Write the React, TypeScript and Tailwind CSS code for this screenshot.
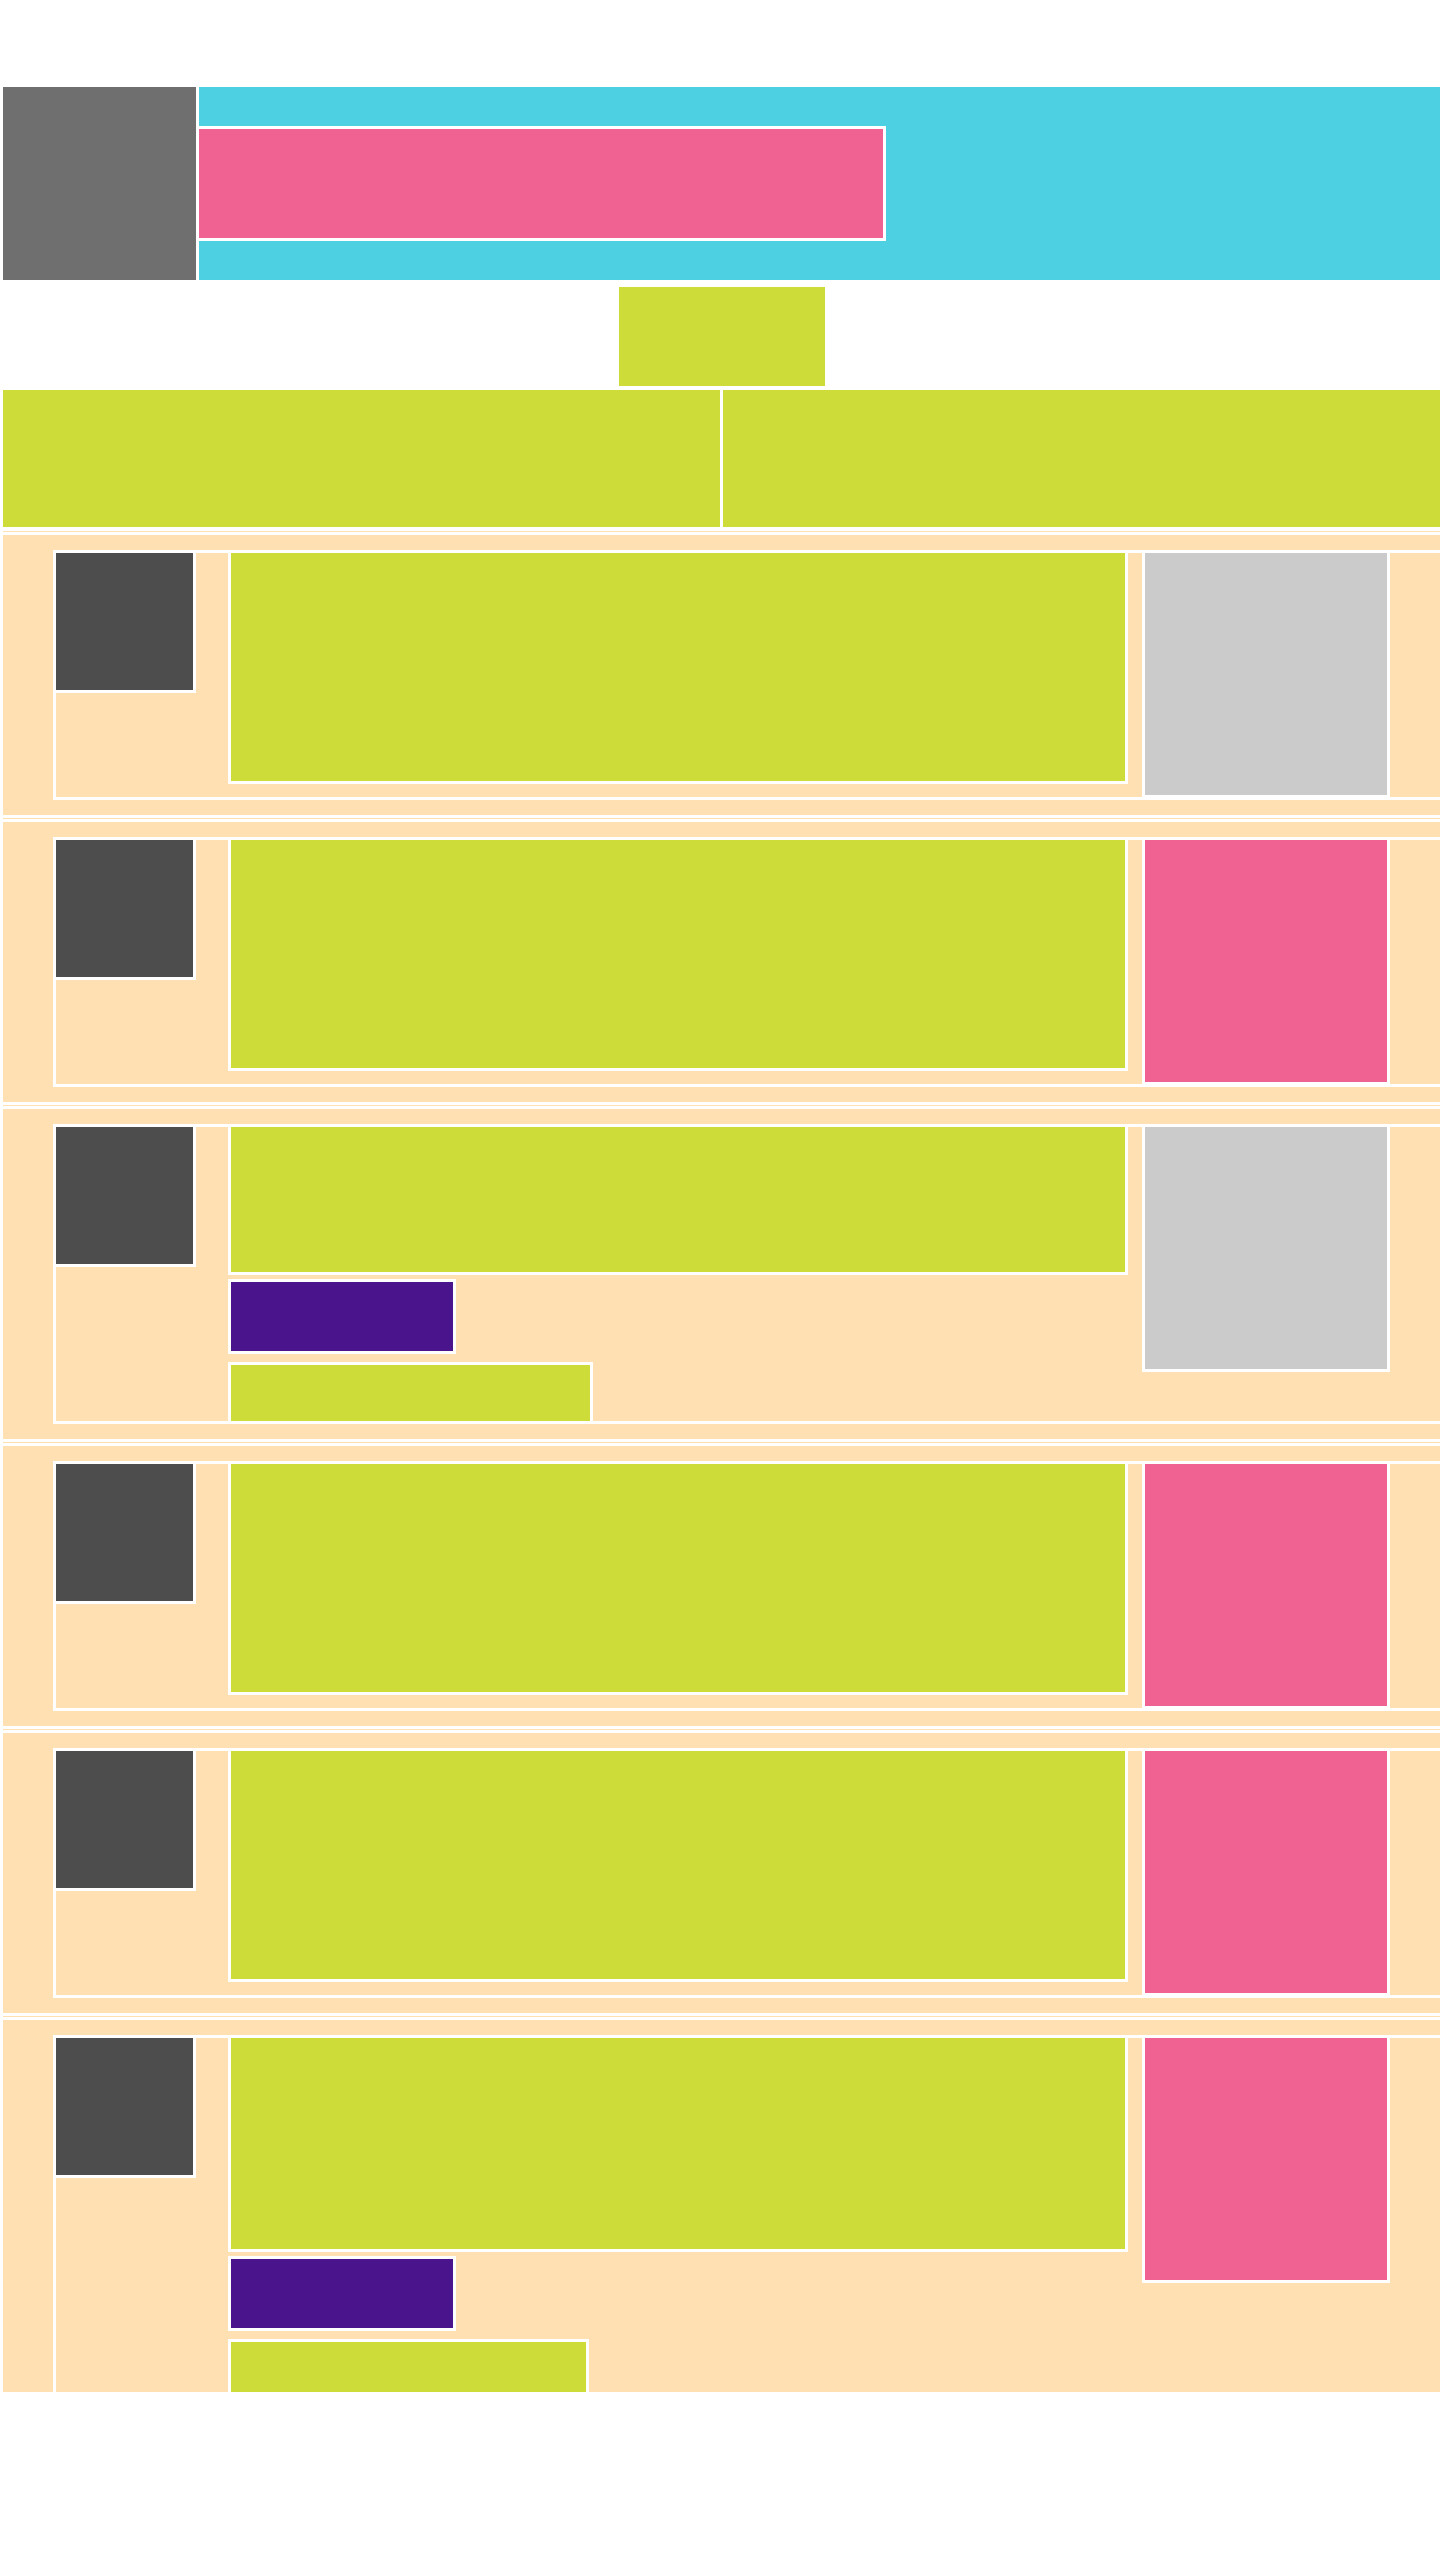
const line = "outline-3 outline-solid outline-white";

type Row = {
  image: "grey" | "pink";
  textHeight: number;
  extra?: { linkWidth: number };
};

const rows: Row[] = [
  { image: "grey", textHeight: 228 },
  { image: "pink", textHeight: 228 },
  { image: "grey", textHeight: 145, extra: { linkWidth: 359 } },
  { image: "pink", textHeight: 228 },
  { image: "pink", textHeight: 228 },
  { image: "pink", textHeight: 211, extra: { linkWidth: 355 } },
];

const Card = ({ row }: { row: Row }) => {
  return (
    <article className={`bg-[#ffe0b2] pl-[53px] py-[18px] ${line}`}>
      <div className={`flex items-start pr-[53px] ${line}`}>
        {/* avatar */}
        <div className={`w-[137px] h-[137px] shrink-0 bg-[#4d4d4d] ${line}`} />
        {/* body */}
        <div className="ml-[38px] w-[894px] shrink-0 flex flex-col items-start">
          <div className={`w-full bg-[#cddc39] ${line}`} style={{ height: row.textHeight }} />
          {row.extra && (
            <>
              <div className={`mt-[10px] w-[222px] h-[69px] bg-[#4a148c] ${line}`} />
              <div
                className={`mt-[14px] h-[56px] bg-[#cddc39] ${line}`}
                style={{ width: row.extra.linkWidth }}
              />
            </>
          )}
        </div>
        {/* picture */}
        <div
          className={`ml-[20px] mb-[2px] w-[242px] h-[242px] shrink-0 ${line} ${
            row.image === "grey" ? "bg-[#cbcbcb]" : "bg-[#f06292]"
          }`}
        />
      </div>
    </article>
  );
};

const App = () => {
  return (
    <main className="min-h-[2560px] w-full overflow-hidden bg-white">
      <div className="w-[1440px] pt-[87px] pl-[3px]">
        {/* header */}
        <header className="flex h-[193px]">
          <div className={`w-[193px] h-[193px] shrink-0 bg-[#6f6f6f] ${line}`} />
          <div className={`ml-[3px] flex-1 flex items-center bg-[#4dd0e1] ${line}`}>
            <div className={`w-[684px] h-[109px] bg-[#f06292] ${line}`} />
          </div>
        </header>

        <div className={`mx-auto mt-[7px] w-[206px] h-[99px] bg-[#cddc39] ${line}`} />

        <nav className="mt-[4px] grid grid-cols-2 gap-[3px] h-[137px]">
          <div className={`bg-[#cddc39] ${line}`} />
          <div className={`bg-[#cddc39] ${line}`} />
        </nav>

        <section
          className={`mt-[4px] h-[1861px] overflow-hidden bg-[#ffe0b2] pt-[4px] flex flex-col gap-[7px] ${line}`}
        >
          {rows.map((row, i) => (
            <Card key={i} row={row} />
          ))}
        </section>
      </div>
    </main>
  );
};

export default App;
